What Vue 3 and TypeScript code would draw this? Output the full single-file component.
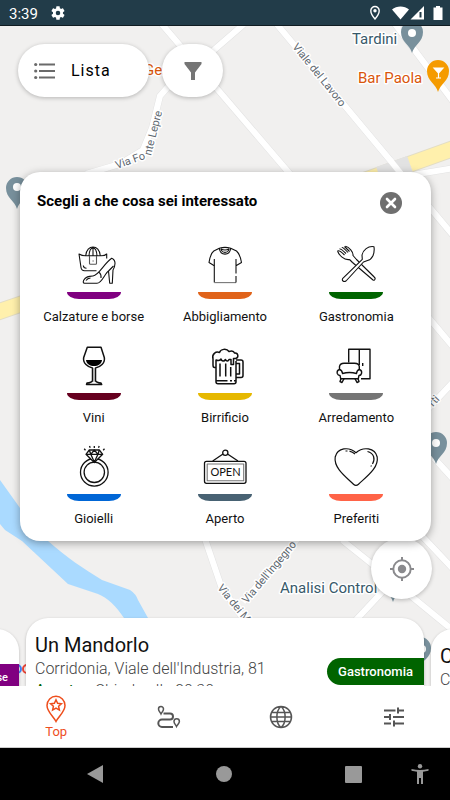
<script setup lang="ts">
import { ref } from 'vue'

interface Category {
  id: string
  label: string
}

const categories: Category[] = [
  { id: 'shoes', label: 'Calzature e borse' },
  { id: 'clothes', label: 'Abbigliamento' },
  { id: 'food', label: 'Gastronomia' },
  { id: 'wine', label: 'Vini' },
  { id: 'beer', label: 'Birrificio' },
  { id: 'furniture', label: 'Arredamento' },
  { id: 'jewels', label: 'Gioielli' },
  { id: 'open', label: 'Aperto' },
  { id: 'favourites', label: 'Preferiti' },
]

const dialogOpen = ref(true)
const selected = ref<string | null>(null)
</script>

<template>
  <div class="screen">
    <header class="status">
      <span class="clock">3:39</span>
      <svg class="gear" viewBox="0 0 24 24" width="16" height="16" aria-hidden="true">
        <path fill="#fff" d="M19.4 13c.04-.3.06-.65.06-1s-.02-.7-.07-1l2.1-1.65c.2-.15.25-.42.13-.64l-2-3.46c-.12-.22-.4-.3-.6-.22l-2.5 1c-.52-.4-1.08-.73-1.7-.98l-.37-2.65A.5.5 0 0 0 14 2h-4a.5.5 0 0 0-.5.42l-.38 2.65c-.6.25-1.17.6-1.7.98l-2.48-1c-.23-.1-.5 0-.6.22l-2 3.46c-.13.22-.08.5.12.64L4.57 11c-.05.3-.08.66-.08 1s.03.7.07 1l-2.1 1.65c-.2.15-.25.42-.13.64l2 3.46c.12.22.4.3.6.22l2.5-1c.52.4 1.08.73 1.7.98l.37 2.65c.04.24.24.42.5.42h4c.25 0 .46-.18.5-.42l.37-2.65c.6-.25 1.17-.6 1.7-.98l2.48 1c.23.1.5 0 .6-.22l2-3.46c.13-.22.08-.5-.12-.64zM12 15.4a3.4 3.4 0 1 1 0-6.8 3.4 3.4 0 0 1 0 6.8z" />
      </svg>
      <span class="spacer"></span>
      <svg viewBox="0 0 12 16" width="12" height="16" aria-hidden="true">
        <path d="M6 1.5a4.2 4.2 0 0 0-4.2 4.2C1.8 9 6 14 6 14s4.2-5 4.2-8.3A4.2 4.2 0 0 0 6 1.5z" fill="none" stroke="#fff" stroke-width="1.4" />
        <circle cx="6" cy="5.7" r="1.7" fill="#fff" />
      </svg>
      <svg class="signals" viewBox="0 0 34 16" width="34" height="16" aria-hidden="true">
        <path d="M0 4.5C4.5.5 12.5.5 17 4.5L8.5 14.5z" fill="#fff" />
        <path d="M18.5 14.5 32 1v13.5z" fill="#fff" />
        <path d="M27.5 7h2v5.5h-2z" fill="#223c49" />
      </svg>
      <svg viewBox="0 0 10 16" width="10" height="16" aria-hidden="true">
        <path d="M3 1h4v1.5h2.5V15h-9V2.5H3z" fill="#fff" />
      </svg>
    </header>

    <main class="stage">
      <svg class="map" viewBox="0 26 450 660" preserveAspectRatio="xMidYMin slice" aria-hidden="true">
        <rect y="26" width="450" height="660" fill="#f1f0ef" />
        <path fill="#aadaff" d="M0 480 20 508 48 541C66 557 84 569 102 580L130 590Q136 594 138 600L148 618 124 618C116 606 108 598 98 594L68 584 22 541 5 530 0 524z" />
        <g class="road-edge">
          <path d="M160 22 290 174M244 24 214 50 167 88 160 96 152 128 143 150 120 164 86 174M275 22 400 172 462 246M392 20 455 104M400 177 455 168M428 317 455 349M455 380 425 412M434 458 455 481M423 537 455 571M342 540 372 564 455 632M384 590 356 620M204 536 221 586 244 620M243 602 300 536" />
        </g>
        <g class="road-fill">
          <path d="M160 22 290 174M244 24 214 50 167 88 160 96 152 128 143 150 120 164 86 174M275 22 400 172 462 246M392 20 455 104M400 177 455 168M428 317 455 349M455 380 425 412M434 458 455 481M423 537 455 571M342 540 372 564 455 632M384 590 356 620M204 536 221 586 244 620M243 602 300 536" />
        </g>
        <path d="M360 182 455 148M-5 313 30 301" stroke="#e3ddc4" stroke-width="17" fill="none" />
        <path d="M360 182 455 148M-5 313 30 301" stroke="#fff0ac" stroke-width="15" fill="none" />
        <path d="M379 175 410 164" stroke="#e2e2e2" stroke-width="17" fill="none" />
        <path d="M390 160 402 175" stroke="#fff" stroke-width="6" fill="none" />

        <g class="pin">
          <path d="M412 53c-2-8-11-11-11-21a11 11 0 0 1 22 0c0 10-9 13-11 21z" />
          <path d="M17 209c-2-8-11-11-11-21a11 11 0 0 1 22 0c0 10-9 13-11 21z" />
          <path d="M436 464c-2-8-11-11-11-21a11 11 0 0 1 22 0c0 10-9 13-11 21z" />
          <path d="M393 602c-2-8-11-11-11-21a11 11 0 0 1 22 0c0 10-9 13-11 21z" />
          <path d="M420 665c-2-8-11-11-11-17a11 11 0 0 1 22 0c0 10-9 13-11 17z" />
        </g>
        <g fill="#fff">
          <circle cx="412" cy="33" r="4" />
          <circle cx="17" cy="187" r="4" />
          <circle cx="436" cy="443" r="4" />
          <circle cx="422" cy="649" r="4" />
        </g>
        <path fill="#f59b00" d="M438 92c-2-8-11-11-11-21a11 11 0 0 1 22 0c0 10-9 13-11 21z" />
        <path d="M434 68h9l-4.5 5zM438.5 73v5M436 78h5" fill="#fff" stroke="#fff" stroke-width="1.2" />

        <g class="poi">
          <text x="352" y="44">Tardini</text>
          <text x="280" y="593">Analisi Control</text>
          <g class="place">
            <text x="358" y="83">Bar Paola</text>
            <text x="144" y="75">Ger</text>
          </g>
        </g>
        <g class="street">
          <text transform="translate(292 47) rotate(51)">Viale del Lavoro</text>
          <text transform="translate(117 169) rotate(-20)">Via Fo</text>
          <text transform="translate(151 156) rotate(-76)">nte Lepre</text>
          <text transform="translate(217 588) rotate(51)">Via dei M</text>
          <text transform="translate(247 604) rotate(-50)">Via dell'Ingegno</text>
          <text transform="translate(433 407) rotate(-47)">rti</text>
        </g>
        <circle cx="17" cy="669" r="4" fill="none" stroke="#4285f4" stroke-width="2" />
        <circle cx="27" cy="669" r="4" fill="none" stroke="#ea4335" stroke-width="2" />
      </svg>

      <div class="overlay">
        <div class="controls">
          <button class="pill list" type="button">
            <svg viewBox="0 0 21 18" width="21" height="18" aria-hidden="true">
              <path d="M5 2.5h16M5 9h16M5 15.5h16" stroke="#6a6a6a" stroke-width="2" />
              <g fill="#6a6a6a"><circle cx="1.7" cy="2.5" r="1.6" /><circle cx="1.7" cy="9" r="1.6" /><circle cx="1.7" cy="15.5" r="1.6" /></g>
            </svg>
            <span>Lista</span>
          </button>
          <button class="pill filter" type="button" aria-label="Filtra">
            <svg viewBox="0 0 18 18" width="18" height="18" aria-hidden="true">
              <path d="M.5 0h17v2L11 10.5V18H7v-7.5L.5 2z" fill="#757575" />
            </svg>
          </button>
        </div>

        <section v-show="dialogOpen" class="dialog" role="dialog" aria-labelledby="dialog-title">
          <div class="dialog-head">
            <h1 id="dialog-title">Scegli a che cosa sei interessato</h1>
            <button class="close" type="button" aria-label="Chiudi" @click="dialogOpen = false">
              <svg viewBox="0 0 22 22" width="22" height="22" aria-hidden="true">
                <circle cx="11" cy="11" r="11" fill="#6f6f6f" />
                <path d="m7 7 8 8M15 7l-8 8" stroke="#fff" stroke-width="2.6" stroke-linecap="round" />
              </svg>
            </button>
          </div>

          <div class="grid">
            <button
              v-for="category in categories"
              :key="category.id"
              type="button"
              class="category"
              :aria-pressed="selected === category.id"
              @click="selected = category.id"
            >
              <svg class="icon" viewBox="0 0 48 40" width="48" height="40" aria-hidden="true">
                <g v-if="category.id === 'shoes'">
                  <path d="M26.5 25.7H14.5Q11.5 25.7 11 22.5L9 9Q12 10.8 15.5 10.8H31Q35 10.8 36.7 9V13.5M15.7 10.8C16.2 5 19.5 2 23 2S29.8 5 30.3 10.8M19 10.8C19.3 6 21 3 23 3S26.7 6 27 10.8M23 2V10.5M13.3 20.5Q13.6 23.3 16.5 23.3" />
                  <path d="M19.5 11V18.5Q19.5 19.2 20.5 19.2H25.5Q26.5 19.2 26.5 18.5V11M22.5 16h1.2" stroke="#555" />
                  <path d="M41.7 13.3Q45.2 15 45 18.5 44.8 22.5 43 25L42.3 38.3H39.7L38.5 26C35 28 32 38.3 27 38.3H14.5Q12.5 38 13.7 35.2C15.5 31.5 19 31.3 23 31 29 30.2 34 18.5 41.7 13.3zM38.5 26 43.5 21M16 35.5Q17.5 33.2 20.5 33M29 27.2Q31.5 29.5 31 33" />
                </g>
                <g v-else-if="category.id === 'clothes'">
                  <path d="M13.3 14V37.5" /><path d="M13.3 37.6H35" stroke="#777" />
                  <path d="M35 37.5V31M35 28.5V14M13.3 20.7 8 17.5Q9.5 8.5 12.8 6L18.3 3.3C19.5 11 28.5 11 29.7 3.3L35.5 6Q39 9 40.5 17.5L35 20.7M18.3 3.3Q24 1.5 29.7 3.3M20 4C21 8.5 27 8.5 28 4M20 4Q24 6 28 4" />
                </g>
                <g v-else-if="category.id === 'food'">
                  <path d="m17.5 14.5 3 3 20.5 17.5q1.5.8 2-.8.5-1-.8-2.2L24.5 14.5 21 10.5C21.5 7 17 2 13.5 1.3M17.5 14.5C12 15.5 7 10 5.5 6M5.5 6Q7 4.5 12.5 10M7.5 4Q9 3.3 14 8.5M9.8 2.5Q11 2 16 7.5M12.5 1.5 17.5 6.5" />
                  <path fill="#fff" d="M42 1.7C36 .7 31 5 30 10L30.3 14.3 10.8 33.3Q9.8 35 11 36T14 36L31.5 17 35.5 15.5C40 14.5 43 9 42 1.7z" />
                </g>
                <g v-else-if="category.id === 'wine'">
                  <path stroke-width="1.5" d="M17.3 1.3H31L34.3 11.5C35.5 17 30 21.3 25.5 22V34.5Q26 36.5 31 37L31.7 38.5H16.5L17 37Q22 36.5 22.5 34.5V22C18 21.3 12.5 17 13.7 11.5z" />
                  <path d="M24 22V36" stroke="#999" />
                  <path d="M16 14H32C31.5 18 28 20 24 20S16.5 18 16 14z" fill="#000" stroke="none" />
                </g>
                <g v-else-if="category.id === 'beer'" stroke-width="1.5">
                  <path d="M15 21.5V36Q15 37.7 17 37.7H33Q35 37.7 35 36V15M15 21.5H13.5Q12 21.5 12 19V13C10.5 8 15 5 18.5 6.5 19.5 3 25.5 2 28 5.5 31 4.5 33 5.5 33.5 7 37.5 6.5 38 12 34.5 12.5H32.5V18.5H30V13.5H28C27 16 25 15 24.5 13.5 23 16 20.5 15 20 13Q18 15.5 15 14V21.5M35 14H40Q42 14 42 16V29.5Q42 31.5 40 31.5H35M35 17.5H38.5V28H35M15 34.7H26.5M29 34.7H31M33 34.7H35M19 17.5V30.5M24.7 17.5V30.5M29.7 21V30.5" />
                </g>
                <g v-else-if="category.id === 'furniture'" stroke-width="1.4">
                  <path d="M16.7 16.5V3.3H38V32.7H29M27.3 3.3V19M30.7 17V20" />
                  <path fill="#fff" d="M7.5 23.5V20.5Q8 17.3 12 17.3H22.5Q27 17.3 27.3 20.5V23.5Q30.3 24.5 29.5 27.5 29 29.5 27 29.5L26.3 32.7H8.7L8 29.5Q6 29.5 5.3 27.5 4.5 24.5 7.5 23.5z" />
                  <path d="M7.5 23.5Q10 24 10.5 27.5 17.5 25.5 24.5 27.5 25 24 27.3 23.5M9 32.7 8 35.5 10 36.5 12 32.7M26 32.7 27 35.5 25 36.5 23 32.7" />
                </g>
                <g v-else-if="category.id === 'jewels'" stroke-width="1.3">
                  <circle cx="24.3" cy="25.3" r="13.8" /><circle cx="24.3" cy="25.3" r="10.2" />
                  <path fill="#fff" d="M19.3 3H29.3L32.7 7.3 24.3 15.5 16 7.3z" />
                  <path d="M16 7.3H32.7M19.3 3 20.8 7.3 24.3 15 28 7.3 29.3 3M20.8 7.3 24.3 3 28 7.3M24.3-1V1M19.5-1 20.2.8M29.2-1 28.5.8M14.2 1.8 15.5 3.3M34.5 1.8 33.2 3.3" />
                </g>
                <g v-else-if="category.id === 'open'" stroke-width="1.3">
                  <rect x="3.5" y="14.3" width="41.5" height="22" rx="2" /><rect x="6.2" y="17" width="36.5" height="16.7" stroke="#777" stroke-width="1.1" />
                  <path d="M11.7 14 22 7M26.5 7 37 14" /><circle cx="24.3" cy="5.8" r="2.6" />
                  <text class="sign" x="24.5" y="29" text-anchor="middle">OPEN</text>
                </g>
                <g v-else stroke-width="1.2">
                  <path d="M24 5.7C17-.5 5.5.5 3.2 10 1.5 21 14 30 21.5 37.2Q24 39.5 26.5 37.2C34 30 47 21 45.2 10 43 .5 31-.5 24 5.7zM17.5 4.2Q20.5 5 23 7M13.5 4H15.5M35.5 4.5C42 6 43.5 12 40.5 17M39.5 18.5 38.8 19.5" />
                </g>
              </svg>
              <span class="bar" :class="category.id"></span>
              <span class="label">{{ category.label }}</span>
            </button>
          </div>
        </section>

        <button class="locate" type="button" aria-label="La mia posizione">
          <svg viewBox="0 0 24 24" width="24" height="24" aria-hidden="true">
            <circle cx="12" cy="12" r="8.7" fill="none" stroke="#8a8a8d" stroke-width="2" />
            <circle cx="12" cy="12" r="4.2" fill="#8a8a8d" />
            <path d="M12 0v4M12 20v4M0 12h4M20 12h4" stroke="#8a8a8d" stroke-width="2" />
          </svg>
        </button>

        <div class="cards">
          <article class="card side">
            <span class="tag small shoes">Calzature e borse</span>
          </article>
          <article class="card">
            <h2>Un Mandorlo</h2>
            <p>Corridonia, Viale dell'Industria, 81</p>
            <p class="hours"><span class="is-open">Aperto</span> · Chiude alle 20:30</p>
            <span class="tag food">Gastronomia</span>
          </article>
          <article class="card side">
            <h2>C</h2>
            <p>C</p>
          </article>
        </div>
      </div>
    </main>

    <nav class="tabs">
      <a href="#top" class="tab active">
        <svg viewBox="0 0 22 28" width="22" height="28" aria-hidden="true">
          <path d="M11 26.5C8 21 2 16.5 2 10.5a9 9.3 0 0 1 18 0C20 16.5 14 21 11 26.5z" />
          <path d="m11 4.8 1.6 3.5 3.8.4-2.8 2.6.8 3.8-3.4-1.9-3.4 1.9.8-3.8-2.8-2.6 3.8-.4z" />
        </svg>
        <span>Top</span>
      </a>
      <a href="#percorsi" class="tab" aria-label="Percorsi">
        <svg viewBox="0 0 24 24" width="24" height="24" aria-hidden="true">
          <path d="M4 9C3 7 1.5 6 1.5 4a2.5 2.5 0 0 1 5 0C6.5 6 5 7 4 9zM19.5 21.5C18.5 19.5 17 18.5 17 16.5a2.7 2.7 0 0 1 5.4 0C22.4 18.5 20.5 19.5 19.5 21.5z" />
          <path d="M6.5 8.500H13a3 3 0 0 1 0 6H5a3.7 3.7 0 0 0 0 7.400H16" class="route" />
        </svg>
      </a>
      <a href="#mondo" class="tab" aria-label="Mondo">
        <svg viewBox="0 0 24 24" width="24" height="24" aria-hidden="true">
          <path d="M22.5 12a10.5 10.5 0 1 1-21 0 10.5 10.5 0 0 1 21 0zM12 1.5C6.5 6 6.5 18 12 22.5M12 1.5C17.5 6 17.5 18 12 22.5M3 7.500H21M1.500 12H22.500M3 16.500H21" />
        </svg>
      </a>
      <a href="#impostazioni" class="tab" aria-label="Impostazioni">
        <svg viewBox="0 0 24 24" width="24" height="24" aria-hidden="true">
          <path d="M2 5.500H13.500M16 2.500V8.500M16 5.500H22M2 12H7.500M8 9V15M11 12H22M2 18.500H9M12 15.500V21.500M12 18.500H22" stroke-width="2" />
        </svg>
      </a>
    </nav>

    <footer class="system">
      <button type="button" aria-label="Indietro">
        <svg viewBox="0 0 16 18" width="16" height="18"><path d="M16 0v18L0 9z" fill="#999" /></svg>
      </button>
      <button type="button" aria-label="Home">
        <svg viewBox="0 0 16 16" width="16" height="16"><circle cx="8" cy="8" r="8" fill="#999" /></svg>
      </button>
      <button type="button" aria-label="Recenti">
        <svg viewBox="0 0 17 17" width="17" height="17"><rect width="17" height="17" rx="1" fill="#999" /></svg>
      </button>
      <button class="a11y" type="button" aria-label="Accessibilità">
        <svg viewBox="0 0 18 20" width="18" height="20"><circle cx="9" cy="2.2" r="2.2" fill="#999" /><path d="M.5 5Q9 7 17.5 5V6.8L12 7.8V20H10V14H8V20H6V7.8L.5 6.8z" fill="#999" /></svg>
      </button>
    </footer>
  </div>
</template>

<style>
body {
  margin: 0;
}
</style>

<style scoped>
.screen {
  display: flex;
  flex-direction: column;
  min-height: 100vh;
  font-family: Roboto, "Liberation Sans", sans-serif;
  color: #111;
}

button {
  padding: 0;
  border: 0;
  background: none;
  font: inherit;
  color: inherit;
  cursor: pointer;
}

svg {
  display: block;
}

h1,
h2,
p {
  margin: 0;
  font-weight: 400;
}

.status {
  display: flex;
  align-items: center;
  height: 26px;
  padding: 0 7px 0 9px;
  box-sizing: border-box;
  border-bottom: 1px solid #101c22;
  background: #223c49;
  color: #fff;
}

.clock {
  padding-top: 2px;
  font-size: 15px;
}

.gear {
  margin-left: 12px;
}

.spacer {
  flex: 1;
}

.signals {
  margin: 0 7px 0 11px;
}

.stage {
  position: relative;
  display: flex;
  flex: 1;
  overflow: hidden;
}

.map {
  position: absolute;
  inset: 0;
  width: 100%;
  height: 100%;
}

.road-edge,
.road-fill {
  fill: none;
  stroke: #e3e3e3;
  stroke-width: 7px;
}

.road-fill {
  stroke: #fff;
  stroke-width: 6px;
}

.pin {
  fill: #78909c;
}

.poi,
.street {
  paint-order: stroke;
  stroke: #fff;
  stroke-width: 3px;
  stroke-linejoin: round;
}

.poi {
  fill: #37596a;
  font-size: 15px;
}

.place {
  fill: #d9560b;
}

.street {
  fill: #606870;
  font-size: 11px;
}

.overlay {
  position: relative;
  display: flex;
  flex: 1;
  flex-direction: column;
  min-width: 0;
}

.controls {
  display: flex;
  gap: 13px;
  padding: 18px 18px 0;
}

.pill {
  display: flex;
  align-items: center;
  height: 53px;
  border-radius: 27px;
  background: #fff;
  box-shadow: 0 1px 4px rgba(0, 0, 0, 0.25);
}

.list {
  gap: 16px;
  width: 131px;
  padding-left: 16px;
  color: #000;
  font-size: 16px;
  letter-spacing: 1px;
}

.filter {
  justify-content: center;
  width: 61px;
}

.dialog {
  position: relative;
  z-index: 1;
  margin: 75px 19px 0 20px;
  padding: 20px 9px 11px 8px;
  border-radius: 20px;
  background: #fff;
  box-shadow: 0 2px 8px rgba(0, 0, 0, 0.35);
}

.dialog-head {
  display: flex;
  justify-content: space-between;
  padding: 0 20px 0 9px;
}

h1 {
  font-size: 15px;
  font-weight: 700;
  line-height: 19px;
  color: #000;
}

.grid {
  display: grid;
  grid-template-columns: repeat(3, 1fr);
  row-gap: 18px;
  margin-top: 31px;
}

.category {
  display: flex;
  flex-direction: column;
  align-items: center;
  gap: 7px;
}

.icon {
  overflow: visible;
  fill: none;
  stroke: #111;
  stroke-width: 1.1;
  stroke-linejoin: round;
}

.sign {
  fill: #111;
  stroke: none;
  font-family: Lato, sans-serif;
  font-size: 11px;
}

.bar {
  width: 54px;
  height: 7px;
  border-radius: 0 0 12px 12px / 0 0 7px 7px;
}

.label {
  font-size: 13px;
  line-height: 22px;
}

.shoes { background: #800080; }
.clothes { background: #e0631a; }
.food { background: #006400; }
.wine { background: #66001f; }
.beer { background: #e6b800; }
.furniture { background: #757575; }
.jewels { background: #0066d6; }
.open { background: #486273; }
.favourites { background: #ff6347; }

.locate {
  display: grid;
  place-items: center;
  align-self: flex-end;
  width: 61px;
  height: 61px;
  margin: -3px 18px 0 0;
  border-radius: 50%;
  background: #fff;
  box-shadow: 0 1px 4px rgba(0, 0, 0, 0.25);
}

.cards {
  display: flex;
  justify-content: center;
  gap: 7px;
  height: 68px;
  margin-top: auto;
}

.card {
  display: grid;
  grid-template-columns: 1fr auto;
  align-content: start;
  flex: none;
  width: calc(100% - 52px);
  box-sizing: border-box;
  padding: 15px 0 0 9px;
  border-radius: 22px 22px 0 0;
  background: #fff;
  box-shadow: 0 1px 3px rgba(0, 0, 0, 0.25);
}

.side {
  margin-top: 11px;
}

.card h2 {
  grid-column: 1;
  font-size: 20px;
  line-height: 25px;
}

.card p {
  grid-column: 1;
  font-size: 16px;
  font-weight: 300;
  line-height: 22px;
  color: #444;
}

.card .is-open {
  color: #006400;
  font-weight: 400;
}

.tag {
  grid-column: 2;
  grid-row: 2 / span 2;
  height: 27px;
  padding: 0 11px;
  border-radius: 14px 0 0 14px;
  color: #fff;
  font-size: 13px;
  font-weight: 500;
  line-height: 27px;
}

.small {
  grid-row: 1;
  margin-top: 20px;
  font-size: 11px;
}

.tabs {
  position: relative;
  display: grid;
  grid-template-columns: repeat(4, 1fr);
  height: 62px;
  box-sizing: border-box;
  border-bottom: 1px solid #ccc;
  background: #fff;
}

.tab {
  display: flex;
  flex-direction: column;
  align-items: center;
  justify-content: center;
  color: #555;
  font-size: 13px;
  line-height: 18px;
  text-decoration: none;
}

.tab svg {
  fill: none;
  stroke: currentColor;
  stroke-width: 1.5;
}

.tab .route {
  stroke-width: 2;
}

.active {
  padding-top: 2px;
  color: #ee4e1d;
}

.system {
  display: grid;
  grid-template-columns: 1fr 1fr 1fr 14px;
  align-items: center;
  height: 52px;
  padding: 0 18px 0 30px;
  background: #000;
}

.system button {
  display: grid;
  place-items: center;
  height: 100%;
}

.system .a11y {
  width: 24px;
  margin-left: -10px;
}
</style>
